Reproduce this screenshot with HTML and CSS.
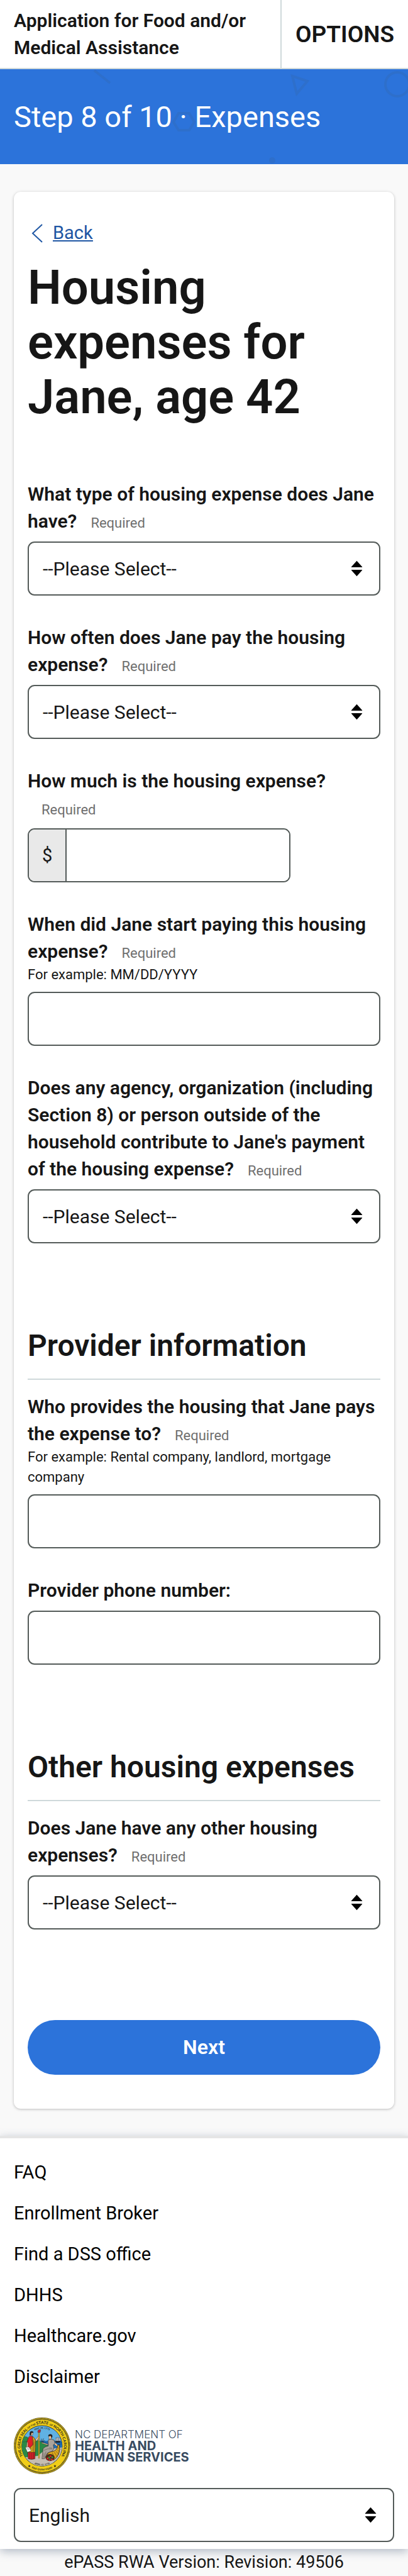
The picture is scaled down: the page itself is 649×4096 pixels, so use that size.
FILE: index.html
```html
<!DOCTYPE html>
<html lang="en">
<head>
<meta charset="utf-8">
<meta name="viewport" content="width=device-width, initial-scale=1">
<title>Housing expenses</title>
<link rel="stylesheet" href="styles.css">
</head>
<body>
<header class="topbar">
  <p class="topbar-title">Application for Food and/or Medical Assistance</p>
  <button class="topbar-options" type="button">OPTIONS</button>
</header>

<div class="banner">
  <svg class="banner-art" viewBox="0 0 649 151" preserveAspectRatio="xMidYMin slice" aria-hidden="true">
    <g fill="none" stroke="#2e6fcb" stroke-width="4">
      <path d="M150 2l25 20"/>
      <path d="M465 11l24 8-17 20z"/>
      <circle cx="632" cy="24" r="19"/>
      <path d="M284 70h17l8 14-8 13h-17l-8-13z"/>
    </g>
    <g fill="#2e6fcb"><circle cx="433" cy="145" r="5"/><circle cx="61" cy="67" r="4"/></g>
  </svg>
  <p class="banner-title">Step 8 of 10 · Expenses</p>
</div>

<main class="card">
  <a class="back" href="#">
    <svg class="back-icon" viewBox="0 0 18 30" aria-hidden="true"><path d="M17 1L2 15l15 14"/></svg>
    <span class="back-text">Back</span>
  </a>
  <h1 class="page-title">Housing expenses for Jane, age 42</h1>

  <form class="form">
    <div class="field">
      <label class="label" for="type">What type of housing expense does Jane have?<span class="required">Required</span></label>
      <div class="select-wrap">
        <select class="control" id="type"><option>--Please Select--</option></select>
        <svg class="arrows" viewBox="0 0 20 26" aria-hidden="true"><path d="M10 0l9 10q1 1-1 1H2q-2 0-1-1zM10 26l9-10q1-1-1-1H2q-2 0-1 1z"/></svg>
      </div>
    </div>
    <div class="field">
      <label class="label" for="often">How often does Jane pay the housing expense?<span class="required">Required</span></label>
      <div class="select-wrap">
        <select class="control" id="often"><option>--Please Select--</option></select>
        <svg class="arrows" viewBox="0 0 20 26" aria-hidden="true"><path d="M10 0l9 10q1 1-1 1H2q-2 0-1-1zM10 26l9-10q1-1-1-1H2q-2 0-1 1z"/></svg>
      </div>
    </div>
    <div class="field">
      <label class="label" for="amount">How much is the housing expense?<span class="required">Required</span></label>
      <div class="money">
        <span class="money-sign">$</span>
        <input class="money-input" id="amount" type="text">
      </div>
    </div>
    <div class="field">
      <label class="label" for="start">When did Jane start paying this housing expense?<span class="required">Required</span></label>
      <p class="hint" id="start-hint">For example: MM/DD/YYYY</p>
      <input class="control" id="start" type="text" aria-describedby="start-hint">
    </div>
    <div class="field">
      <label class="label" for="agency">Does any agency, organization (including Section 8) or person outside of the household contribute to Jane's payment of the housing expense?<span class="required">Required</span></label>
      <div class="select-wrap">
        <select class="control" id="agency"><option>--Please Select--</option></select>
        <svg class="arrows" viewBox="0 0 20 26" aria-hidden="true"><path d="M10 0l9 10q1 1-1 1H2q-2 0-1-1zM10 26l9-10q1-1-1-1H2q-2 0-1 1z"/></svg>
      </div>
    </div>

    <h2 class="section-title">Provider information</h2>
    <div class="field">
      <label class="label" for="provider">Who provides the housing that Jane pays the expense to?<span class="required">Required</span></label>
      <p class="hint" id="provider-hint">For example: Rental company, landlord, mortgage company</p>
      <input class="control" id="provider" type="text" aria-describedby="provider-hint">
    </div>
    <div class="field">
      <label class="label" for="phone">Provider phone number:</label>
      <input class="control" id="phone" type="tel">
    </div>

    <h2 class="section-title">Other housing expenses</h2>
    <div class="field">
      <label class="label" for="other">Does Jane have any other housing expenses?<span class="required">Required</span></label>
      <div class="select-wrap">
        <select class="control" id="other"><option>--Please Select--</option></select>
        <svg class="arrows" viewBox="0 0 20 26" aria-hidden="true"><path d="M10 0l9 10q1 1-1 1H2q-2 0-1-1zM10 26l9-10q1-1-1-1H2q-2 0-1 1z"/></svg>
      </div>
    </div>

    <button class="next" type="submit">Next</button>
  </form>
</main>

<footer class="footer">
  <nav class="links">
    <a class="link" href="#">FAQ</a>
    <a class="link" href="#">Enrollment Broker</a>
    <a class="link" href="#">Find a DSS office</a>
    <a class="link" href="#">DHHS</a>
    <a class="link" href="#">Healthcare.gov</a>
    <a class="link" href="#">Disclaimer</a>
  </nav>
  <div class="brand">
    <svg class="seal" viewBox="0 0 450 450" role="img" aria-label="Great Seal of the State of North Carolina">
      <defs>
        <path id="ring" d="M90 333A173 173 0 1 1 360 333"/>
        <path id="motto" d="M125 393A195 195 0 0 0 325 393"/>
        <path id="date-top" d="M155 109A135 135 0 0 1 295 109"/>
        <path id="date-bottom" d="M150 362A156 156 0 0 0 300 362"/>
        <clipPath id="scene"><circle cx="224" cy="226" r="160"/></clipPath>
      </defs>
      <circle cx="225" cy="225" r="225" fill="#4b4420"/>
      <circle cx="225" cy="225" r="218" fill="none" stroke="#d8b81c" stroke-width="10" stroke-dasharray="6 3"/>
      <circle cx="225" cy="225" r="210" fill="#f0cd17" stroke="#4b4420" stroke-width="2"/>
      <circle cx="224" cy="226" r="163" fill="#231f20"/>
      <g clip-path="url(#scene)">
        <path fill="#60b1e3" d="M60 60h330v340H60z"/>
        <path fill="#1f6fb5" d="M200 186h190v62H200z"/>
        <path stroke="#124a80" stroke-width="3" fill="none" d="M205 196h55M215 205h50M330 202h60M340 214h50"/>
        <path fill="#2a8a47" stroke="#17502a" stroke-width="2" d="M60 165q32-28 62 2l76 18q50 22 82 44l-30 80-190 20z"/>
        <path stroke="#17502a" stroke-width="2" fill="none" d="M60 200q40-16 70 0"/>
        <path fill="#c6bdb2" d="M60 320l130-15 60-50 150-20v180H60z"/>
        <g fill="#e8e8e8" stroke="#231f20" stroke-width="2"><path d="M333 162h9v26h-9zM345 158h10v30h-10zM358 162h9v26h-9z"/><path d="M330 189h40l-5 9h-30z" fill="#231f20"/></g>
        <path fill="#f2c79b" stroke="#231f20" stroke-width="2" d="M134 112q14-6 18 8l-2 18-14 6-6-10zM172 176l26-30 6 5-24 40zM106 190l-6 52 12 6 8-50z"/>
        <path fill="#231f20" d="M126 128q0-18 16-19 14 0 14 12l-16 2-2 16-11 6z"/>
        <path fill="#e22026" stroke="#231f20" stroke-width="2" d="M120 152q20-10 34 2l10 34-4 60-48 0 0-50-8-4z"/>
        <path fill="#d8a51d" stroke="#231f20" stroke-width="3" d="M148 150q16 8 26 34l-2 54-4 56-58-8 8-34 34-36z"/>
        <path stroke="#231f20" stroke-width="2" fill="none" d="M160 175l-10 90M168 190l-12 90M138 240l-14 44"/>
        <path fill="#e22026" stroke="#231f20" stroke-width="3" d="M112 276h56l0 52q-30 10-54 0zM128 280v50M144 280v52M158 280v50"/>
        <path fill="#fff" stroke="#231f20" stroke-width="2" d="M92 238l28-4 18 30-30 12z"/>
        <path stroke="#231f20" stroke-width="2" d="M104 248l16-4M108 256l18-4"/>
        <path fill="#f0b71b" stroke="#5a430d" stroke-width="2" d="M196 118h8v206h-8z"/>
        <path fill="#c8232b" stroke="#231f20" stroke-width="2" d="M192 120q-6-18 10-24l12 2-4 20z"/>
        <path stroke="#231f20" stroke-width="3" d="M220 168l8 30M236 166l-6 30M212 178l16 22M246 180l-16 20"/>
        <path fill="#f2c79b" stroke="#231f20" stroke-width="2" d="M278 140q20-10 24 6l-4 24-18 2zM224 198l48 14-2 8-50-16zM318 190l38 36-6 8-40-30z"/>
        <path fill="#231f20" d="M274 150q-2-16 16-17 18 0 17 20l-8 12-4-18z"/>
        <path fill="#aaa39b" stroke="#231f20" stroke-width="3" d="M276 176q20-10 44 4l8 26-14 12 4 22q-4 40-50 42l-24 46-20 0 8-80q20-20 42-22l-2-40z"/>
        <path fill="none" stroke="#5c5650" stroke-width="3" d="M238 262q30-20 66-12M240 282l-4 40M256 270l-12 48M282 240l24 4"/>
        <path fill="#dca71c" stroke="#231f20" stroke-width="4" d="M362 216q14 80-44 122l-56-30q0-30 34-36 50-4 52-50z"/>
        <path stroke="#5a430d" stroke-width="3" fill="none" d="M350 238l20 16M346 256l20 18M336 268l22 26M322 276l22 34M306 280l20 44"/>
        <ellipse cx="288" cy="318" rx="36" ry="28" fill="#4a2c17"/>
        <g fill="#d9272e"><circle cx="268" cy="326" r="8"/><circle cx="292" cy="308" r="7"/><circle cx="302" cy="334" r="8"/><circle cx="282" cy="340" r="6"/></g>
        <g fill="#3c9a3f"><circle cx="280" cy="318" r="7"/><circle cx="306" cy="316" r="7"/><circle cx="288" cy="330" r="5"/></g>
      </g>
      <g class="seal-text">
        <text><textPath href="#ring" startOffset="50%"><tspan font-size="29">THE GREAT SEAL </tspan><tspan font-size="20">OF THE </tspan><tspan font-size="33">STATE </tspan><tspan font-size="20">OF </tspan><tspan font-size="30">NORTH CAROLINA</tspan></textPath></text>
        <text font-size="19"><textPath href="#motto" startOffset="50%">ESSE QUAM VIDERI</textPath></text>
        <text font-size="19"><textPath href="#date-top" startOffset="50%">MAY 20, 1775</textPath></text>
        <text font-size="18"><textPath href="#date-bottom" startOffset="50%">APRIL 12, 1776</textPath></text>
      </g>
      <path fill="#231f20" d="M123 375l3 7h8l-6 5 2 8-7-4-7 4 2-8-6-5h8zM327 375l3 7h8l-6 5 2 8-7-4-7 4 2-8-6-5h8z"/>
    </svg>
    <p class="brand-text">
      <span class="brand-light">NC DEPARTMENT OF</span>
      <span class="brand-bold">HEALTH AND</span>
      <span class="brand-bold">HUMAN SERVICES</span>
    </p>
  </div>
  <div class="select-wrap">
    <select class="control" aria-label="Language"><option>English</option></select>
    <svg class="arrows" viewBox="0 0 20 26" aria-hidden="true"><path d="M10 0l9 10q1 1-1 1H2q-2 0-1-1zM10 26l9-10q1-1-1-1H2q-2 0-1 1z"/></svg>
  </div>
</footer>
<p class="version">ePASS RWA Version: Revision: 49506</p>
</body>
</html>
```
FILE: styles.css
```css
* { box-sizing: border-box; }

body {
  margin: 0;
  background: #f9f9f9;
  color: #161616;
  font-family: Roboto, "Liberation Sans", sans-serif;
  font-size: 29px;
  line-height: 43px;
}

p, h1, h2 { margin: 0; }

button, input, select { font: inherit; color: inherit; }

.topbar {
  display: flex;
  background: #fff;
  border-bottom: 2px solid #cfd9db;
}

.topbar-title {
  flex: 1;
  padding: 11px 22px;
  font-size: 30px;
  font-weight: 600;
}

.topbar-options {
  padding: 0 22px;
  border: 0;
  border-left: 2px solid #cfd9db;
  background: none;
  font-size: 37px;
  font-weight: 600;
}

.banner {
  position: relative;
  display: flex;
  align-items: center;
  min-height: 151px;
  padding: 0 22px;
  background: #2c73da;
  color: #fff;
  font-size: 47px;
  line-height: 60px;
}

.banner-art {
  position: absolute;
  inset: 0;
  width: 100%;
  height: 100%;
}

.banner-title { position: relative; }

.card {
  margin: 44px 22px 43px;
  padding: 44px 22px 54px;
  border-radius: 11px;
  background: #fff;
  box-shadow: 0 1px 4px rgba(0, 0, 0, 0.25);
}

.back {
  display: flex;
  align-items: center;
  gap: 16px;
  padding-left: 6px;
  color: #1f57a4;
}

.back-icon { width: 18px; height: 30px; }

.back-icon path { fill: none; stroke: currentColor; stroke-width: 2; }

.back-text { text-decoration: underline; }

.page-title {
  margin: 22px 0 89px;
  font-size: 76px;
  font-weight: 600;
  line-height: 87px;
}

.field + .field { margin-top: 45px; }

.label {
  display: block;
  margin-bottom: 11px;
  font-size: 30px;
  font-weight: 600;
}

.label:has(+ .hint) { margin-bottom: 0; }

.required {
  display: inline-block;
  margin-left: 22px;
  color: #6f6f6f;
  font-size: 22px;
  font-weight: 400;
  line-height: 26px;
}

.hint {
  margin-bottom: 11px;
  font-size: 22px;
  line-height: 32px;
}

.control {
  display: block;
  width: 100%;
  height: 86px;
  padding: 0 22px;
  border: 2px solid #545b59;
  border-radius: 11px;
  background: #fff;
  font-size: 30px;
  appearance: none;
}

.select-wrap { position: relative; }

.arrows {
  position: absolute;
  top: 30px;
  right: 28px;
  width: 19px;
  height: 26px;
  pointer-events: none;
}

.money {
  display: flex;
  width: 418px;
  max-width: 100%;
  height: 86px;
  overflow: hidden;
  border: 2px solid #545b59;
  border-radius: 11px;
}

.money-sign {
  display: flex;
  align-items: center;
  padding: 0 21px;
  border-right: 2px solid #545b59;
  background: #e9e9e9;
}

.money-input {
  flex: 1;
  min-width: 0;
  padding: 0 22px;
  border: 0;
  background: #fff;
}

.section-title {
  margin: 133px 0 21px;
  padding-bottom: 22px;
  border-bottom: 2px solid #cfd9db;
  font-size: 48px;
  font-weight: 600;
  line-height: 60px;
}

.next {
  display: block;
  width: 100%;
  height: 87px;
  margin-top: 144px;
  border: 0;
  border-radius: 44px;
  background: #2c73da;
  color: #fff;
  font-size: 32px;
  font-weight: 600;
}

.footer {
  padding: 33px 22px 11px;
  border-top: 4px solid #e5e5e5;
  background: #fff;
  box-shadow: 0 4px 14px rgba(70, 90, 120, 0.4);
}

.links {
  display: flex;
  flex-direction: column;
  align-items: flex-start;
  gap: 22px;
}

.link { color: #000; text-decoration: none; }

.brand {
  display: flex;
  align-items: center;
  gap: 7px;
  margin: 43px 0 22px;
}

.seal { width: 90px; height: 90px; }

.seal-text {
  fill: #231f20;
  font-family: Lato, sans-serif;
  font-weight: 700;
  text-anchor: middle;
}

.brand-text {
  display: flex;
  flex-direction: column;
  color: #384b61;
  font-family: Inter, sans-serif;
  line-height: 18px;
}

.brand-light { font-size: 17px; font-weight: 300; }

.brand-bold { font-size: 20px; font-weight: 700; }

.version { font-size: 27px; text-align: center; }
```
